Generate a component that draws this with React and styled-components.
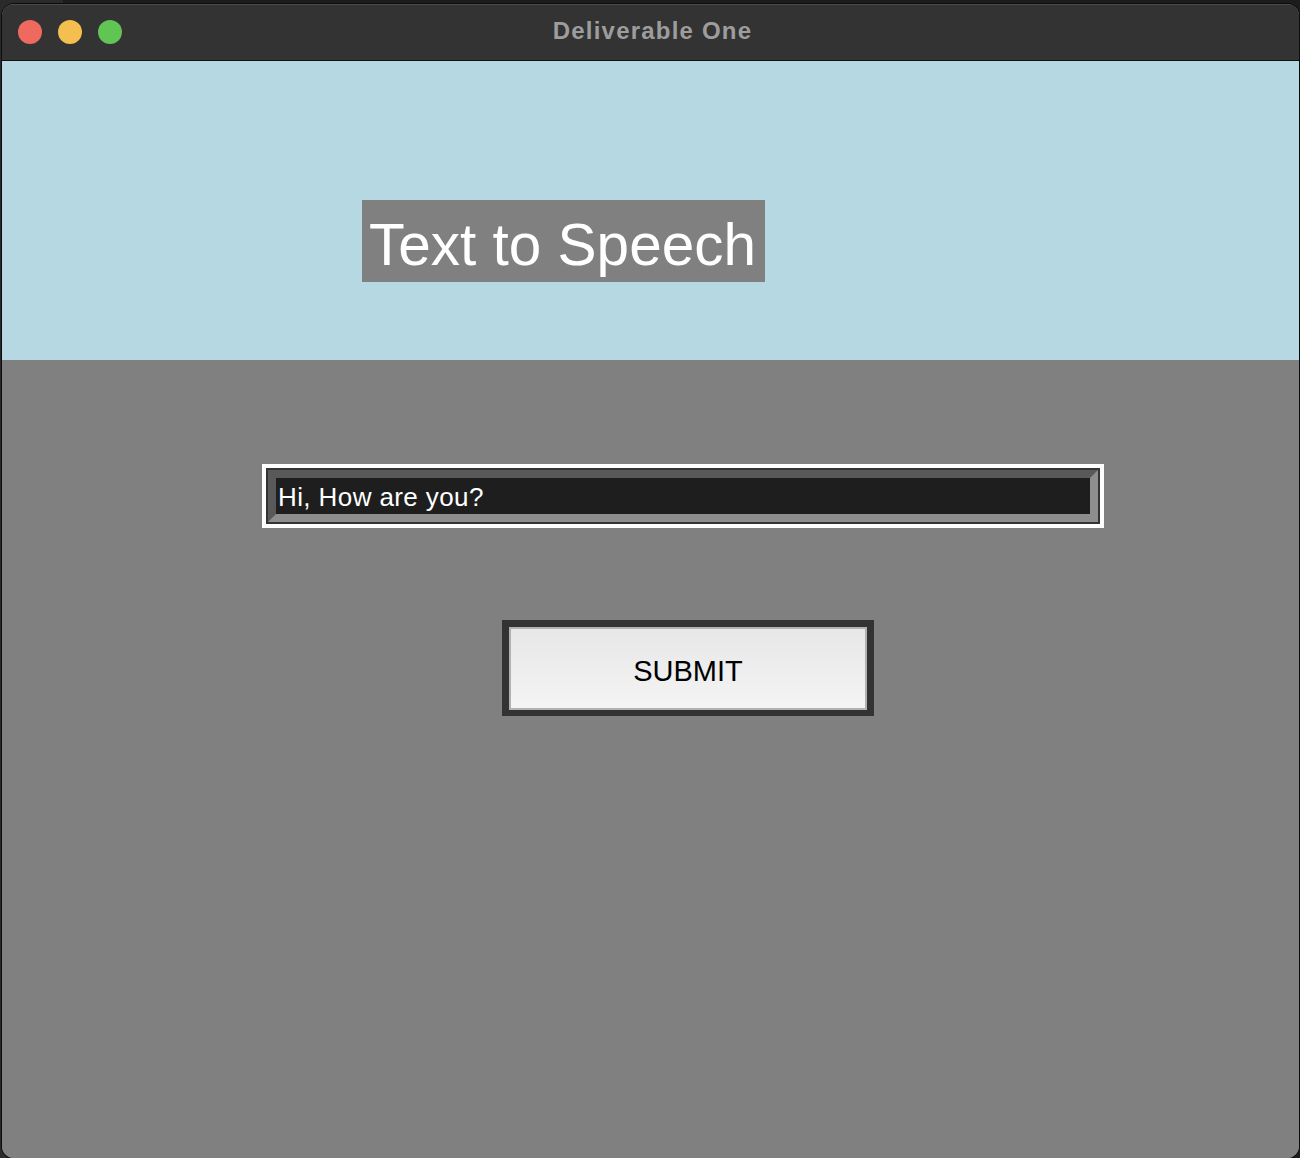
import styled, {createGlobalStyle} from 'styled-components';

const GlobalStyle = createGlobalStyle`
    html, body {
        margin: 0;
        padding: 0;
        background: #1c1c1c;
    }

    body {
        width: 1300px;
        height: 1158px;
        overflow: hidden;
        font-family: "Liberation Sans", Arial, sans-serif;
    }
`;

export default function App() {
    return (
        <>
            <GlobalStyle/>
            <Desktop>
                <Window>
                    <TitleBar>
                        <Lights>
                            <Light color='#ee6a5f'/>
                            <Light color='#f5bf4f'/>
                            <Light color='#61c554'/>
                        </Lights>
                        <WindowTitle>Deliverable One</WindowTitle>
                    </TitleBar>
                    <Header>
                        <Heading>Text to Speech</Heading>
                    </Header>
                    <Body>
                        <EntryFrame>
                            <EntryWell>
                                <EntryBevel>
                                    <EntryField>Hi, How are you?</EntryField>
                                </EntryBevel>
                            </EntryWell>
                        </EntryFrame>
                        <SubmitFrame>
                            <SubmitButton>SUBMIT</SubmitButton>
                        </SubmitFrame>
                    </Body>
                </Window>
            </Desktop>
        </>
    );
}

const Desktop = styled.div`
    width: 1300px;
    height: 1158px;
    padding: 4px 1px 0 2px;
    box-sizing: border-box;
    background: linear-gradient(90deg, #2a2a2a 0, #2a2a2a 63px, #1c1c1c 63px);
`;

const Window = styled.div`
    height: 100%;
    display: flex;
    flex-direction: column;
    border-radius: 12px;
    overflow: hidden;
    box-shadow: 0 0 0 1px #0c0c0c, inset 0 1px 0 #5a5a5a;
    background: #808080;
`;

const TitleBar = styled.div`
    height: 57px;
    flex: none;
    position: relative;
    display: flex;
    align-items: center;
    justify-content: center;
    background: #333333;
    border-top: 1px solid #4a4a4a;
    border-bottom: 1px solid #111111;
    box-sizing: border-box;
`;

const Lights = styled.div`
    position: absolute;
    left: 16px;
    top: 15px;
    display: flex;
    gap: 16px;
`;

const Light = styled.span`
    width: 24px;
    height: 24px;
    border-radius: 50%;
    background: ${props => props.color};
`;

const WindowTitle = styled.div`
    font-size: 24px;
    font-weight: 700;
    letter-spacing: 1.2px;
    color: #9d9d9d;
    margin: 0 0 3px 4px;
`;

const Header = styled.div`
    height: 299px;
    flex: none;
    box-sizing: border-box;
    padding: 139px 0 0 360px;
    background: #b6d8e3;
`;

const Heading = styled.div`
    display: inline-flex;
    align-items: center;
    height: 82px;
    box-sizing: border-box;
    padding: 7px 9px 0 7px;
    font-size: 58.5px;
    color: #ffffff;
    background: #808080;
`;

const Body = styled.div`
    flex: 1;
    display: flex;
    flex-direction: column;
    align-items: flex-start;
    padding: 104px 0 0 260px;
    background: #808080;
`;

const EntryFrame = styled.div`
    border: 4px solid #ffffff;
`;

const EntryWell = styled.div`
    border: 2px solid #333333;
`;

const EntryBevel = styled.div`
    border-style: solid;
    border-width: 8px;
    border-color: #595959 #8e8e8e #8e8e8e #595959;
`;

const EntryField = styled.div`
    width: 812px;
    height: 36px;
    line-height: 38px;
    padding-left: 2px;
    font-size: 26px;
    letter-spacing: 0.4px;
    color: #ffffff;
    background: #1e1e1e;
`;

const SubmitFrame = styled.div`
    margin: 92px 0 0 240px;
    border: 7px solid #333333;
    border-bottom-width: 6px;
`;

const SubmitButton = styled.div`
    width: 354px;
    height: 73px;
    padding-top: 6px;
    display: flex;
    align-items: center;
    justify-content: center;
    border: 2px solid #b2b2b2;
    font-size: 29px;
    line-height: 1;
    color: #000000;
    background: linear-gradient(180deg, #e7e7e7, #f4f4f4);
`;
